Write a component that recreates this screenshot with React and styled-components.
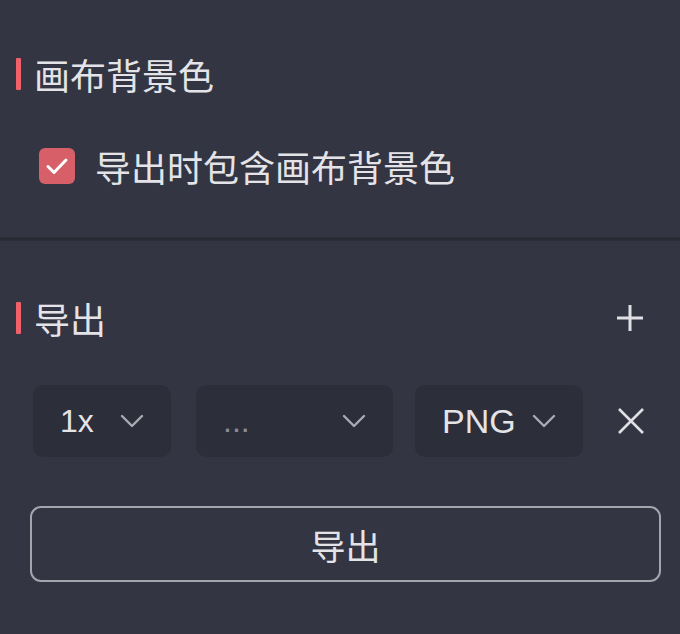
import styled, { createGlobalStyle } from "styled-components"

const GlobalStyle = createGlobalStyle`
  body {
    margin: 0;
    background: #333542;
  }
`

const Panel = styled.div`
  width: 680px;
  height: 634px;
  background: #333542;
  color: #e4e4e8;
  font-family: "Liberation Sans", "Noto Sans CJK SC", sans-serif;
  overflow: hidden;
`

const Section = styled.section`
  padding-top: ${(p) => p.$top}px;
  height: ${(p) => p.$height}px;
  box-sizing: border-box;
`

const Divider = styled.div`
  height: 4px;
  background: linear-gradient(#2e2f3b, #272832 50%, #2e2f3b);
`

const TitleRow = styled.div`
  display: flex;
  align-items: center;
  justify-content: space-between;
  height: 34px;
  padding: 0 36px 0 16px;
`

const Title = styled.h3`
  display: flex;
  align-items: center;
  margin: 0;
  font-size: 36px;
  font-weight: 400;
  line-height: 34px;
  font-family: "Noto Sans CJK SC", sans-serif;

  &::before {
    content: "";
    width: 5px;
    height: 32px;
    margin-right: 13px;
    background: #f0616a;
    border-radius: 1px;
  }
`

const CheckRow = styled.label`
  display: flex;
  align-items: center;
  gap: 20px;
  margin: 57px 0 0 39px;
  font-size: 36px;
  line-height: 36px;
  font-family: "Noto Sans CJK SC", sans-serif;
`

const CheckBox = styled.span`
  width: 36px;
  height: 36px;
  border-radius: 6px;
  background: #d65f68;
  display: flex;
  align-items: center;
  justify-content: center;
`

const IconButton = styled.button`
  border: none;
  background: none;
  padding: 0;
  color: #e0e0e4;
  display: flex;
  align-items: center;
  justify-content: center;
  cursor: pointer;
`

const ExportRow = styled.div`
  display: flex;
  align-items: center;
  margin: 50px 0 0 33px;
  padding-right: 35px;
`

const Select = styled.div`
  width: ${(p) => p.$width}px;
  height: 72px;
  margin-right: ${(p) => p.$gap}px;
  box-sizing: border-box;
  padding: 0 27px;
  border-radius: 10px;
  background: #2c2e3a;
  display: flex;
  align-items: center;
  justify-content: space-between;
  font-size: ${(p) => p.$size || 32}px;
  color: ${(p) => (p.$muted ? "#8a8c96" : "#e4e4e8")};
`

const Remove = styled(IconButton)`
  margin-left: auto;
`

const ExportButton = styled.button`
  display: block;
  width: 631px;
  height: 76px;
  margin: 49px 0 0 30px;
  border: 2px solid #a4a5ad;
  border-radius: 11px;
  background: transparent;
  color: #e4e4e8;
  font-size: 35px;
  font-family: "Noto Sans CJK SC", sans-serif;
  cursor: pointer;
`

const Chevron = () => (
  <svg width="24" height="14" viewBox="0 0 24 14" fill="none">
    <path d="M2 2l10 10L22 2" stroke="#a9abb3" strokeWidth="2.4" strokeLinecap="round" strokeLinejoin="round" />
  </svg>
)

const Check = () => (
  <svg width="24" height="20" viewBox="0 0 24 20" fill="none">
    <path d="M3 10.5l6 6L21 4" stroke="#fff" strokeWidth="3" strokeLinecap="round" strokeLinejoin="round" />
  </svg>
)

const PlusIcon = () => (
  <svg width="28" height="28" viewBox="0 0 28 28" fill="none">
    <path d="M14 1v26M1 14h26" stroke="#e0e0e4" strokeWidth="3" />
  </svg>
)

const CloseIcon = () => (
  <svg width="28" height="26" viewBox="0 0 28 26" fill="none">
    <path d="M2 1l24 24M26 1L2 25" stroke="#e0e0e4" strokeWidth="2.6" />
  </svg>
)

export default function App() {
  return (
    <Panel>
      <GlobalStyle />
      <Section $top={57} $height={237}>
        <TitleRow>
          <Title>画布背景色</Title>
        </TitleRow>
        <CheckRow>
          <CheckBox>
            <Check />
          </CheckBox>
          导出时包含画布背景色
        </CheckRow>
      </Section>
      <Divider />
      <Section $top={60}>
        <TitleRow>
          <Title>导出</Title>
          <IconButton aria-label="add">
            <PlusIcon />
          </IconButton>
        </TitleRow>
        <ExportRow>
          <Select $width={138} $gap={25}>
            <span>1x</span>
            <Chevron />
          </Select>
          <Select $width={197} $gap={22} $muted>
            <span>...</span>
            <Chevron />
          </Select>
          <Select $width={168} $gap={0} $size={34}>
            <span>PNG</span>
            <Chevron />
          </Select>
          <Remove aria-label="remove">
            <CloseIcon />
          </Remove>
        </ExportRow>
        <ExportButton>导出</ExportButton>
      </Section>
    </Panel>
  )
}
